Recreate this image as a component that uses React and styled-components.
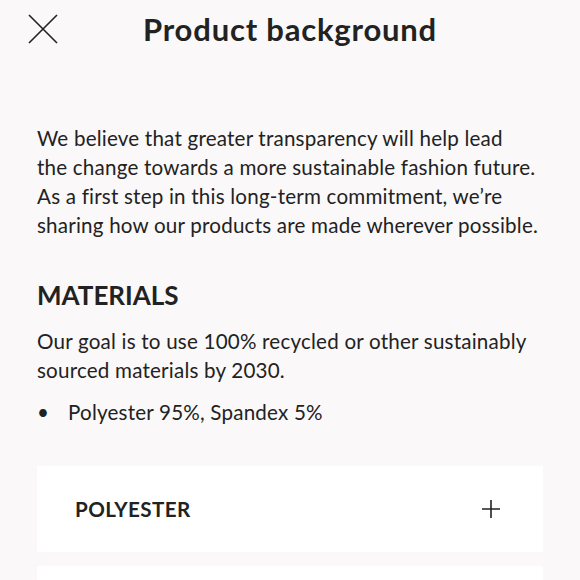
import styled, { createGlobalStyle } from "styled-components";

const GlobalStyle = createGlobalStyle`
  html, body {
    margin: 0;
    padding: 0;
    background: #faf8f8;
  }
  body {
    font-family: Lato, "Noto Sans", sans-serif;
    color: #222222;
  }
`;

const Page = styled.div`
  width: 580px;
  height: 580px;
  overflow: hidden;
  background: #faf8f8;
`;

const Header = styled.div`
  height: 58px;
  display: flex;
  align-items: center;
  padding-left: 28px;
`;

const CloseBtn = styled.button`
  width: 30px;
  height: 30px;
  padding: 0;
  border: none;
  background: none;
  display: flex;
`;

const Title = styled.h1`
  flex: 1;
  margin: 0;
  padding-right: 58px;
  text-align: center;
  font-size: 31px;
  font-weight: 700;
  letter-spacing: 0.8px;
  color: #222222;
`;

const Content = styled.div`
  padding: 66px 37px 0 37px;
`;

const Text = styled.p`
  margin: 0;
  font-size: 20.6px;
  line-height: 29px;
  letter-spacing: 0.2px;
  color: #222222;
`;

const Heading = styled.h2`
  margin: 39px 0 16px;
  font-size: 26px;
  font-weight: 700;
  line-height: 32px;
  color: #222222;
`;

const List = styled.ul`
  list-style: none;
  margin: 13px 0 0;
  padding: 0;
`;

const Item = styled.li`
  display: flex;
  font-size: 20.6px;
  line-height: 29px;
  letter-spacing: 0.2px;
  &::before {
    content: "•";
    width: 31px;
  }
`;

const Card = styled.div`
  background: #ffffff;
  height: 86px;
  display: flex;
  align-items: center;
  justify-content: space-between;
  padding: 0 42px 0 38px;
  margin-top: ${(p) => p.$gap}px;
`;

const CardTitle = styled.span`
  font-size: 20.6px;
  font-weight: 700;
  letter-spacing: 0.4px;
  color: #222222;
`;

const XIcon = () => (
  <svg width="30" height="30" viewBox="0 0 30 30">
    <path d="M1 1 L29 29 M29 1 L1 29" stroke="#222" strokeWidth="1.6" fill="none" />
  </svg>
);

const PlusIcon = () => (
  <svg width="20" height="20" viewBox="0 0 20 20">
    <path d="M10 1 V19 M1 10 H19" stroke="#222" strokeWidth="1.6" fill="none" />
  </svg>
);

export default function App() {
  return (
    <Page>
      <GlobalStyle />
      <Header>
        <CloseBtn aria-label="Close">
          <XIcon />
        </CloseBtn>
        <Title>Product background</Title>
      </Header>
      <Content>
        <Text>
          We believe that greater transparency will help lead
          <br />
          the change towards a more sustainable fashion future.
          <br />
          As a first step in this long-term commitment, we’re
          <br />
          sharing how our products are made wherever possible.
        </Text>
        <Heading>MATERIALS</Heading>
        <Text>
          Our goal is to use 100% recycled or other sustainably
          <br />
          sourced materials by 2030.
        </Text>
        <List>
          <Item>Polyester 95%, Spandex 5%</Item>
        </List>
        <Card $gap={39}>
          <CardTitle>POLYESTER</CardTitle>
          <PlusIcon />
        </Card>
        <Card $gap={14} />
      </Content>
    </Page>
  );
}
